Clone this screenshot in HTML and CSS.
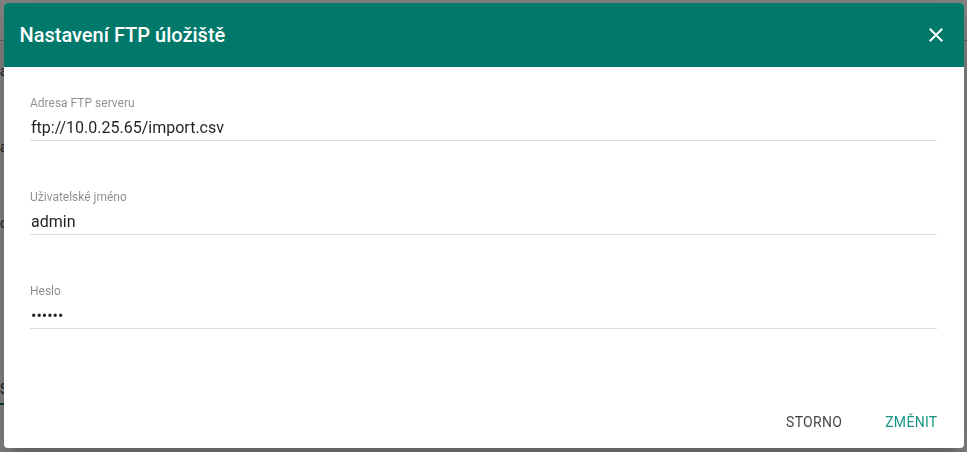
FILE: index.html
```html
<!DOCTYPE html>
<html lang="cs">
<head>
  <meta charset="UTF-8" />
  <meta name="viewport" content="width=device-width, initial-scale=1">
  <title>Nastavení FTP úložiště</title>
  <link rel="stylesheet" href="styles.css">
</head>

<body>
  <div class="page">
    <div class="page-bar"></div>
    <p class="page-line">a</p>
    <p class="page-line">a</p>
    <p class="page-line">c</p>
    <div class="page-tabs"><span class="tab active">S</span></div>
  </div>

  <div class="backdrop">
    <div class="dialog">
      <div class="dialog-head">
        <h2>Nastavení FTP úložiště</h2>
        <button class="close" aria-label="Zavřít">
          <svg viewBox="0 0 24 24" width="24" height="24"><path d="M19 6.41L17.59 5 12 10.59 6.41 5 5 6.41 10.59 12 5 17.59 6.41 19 12 13.41 17.59 19 19 17.59 13.41 12z"/></svg>
        </button>
      </div>

      <div class="dialog-body">
        <div class="field">
          <label for="url">Adresa FTP serveru</label>
          <input type="text" id="url" value="ftp://10.0.25.65/import.csv" />
        </div>

        <div class="field">
          <label for="user">Uživatelské jméno</label>
          <input type="text" id="user" value="admin" />
        </div>

        <div class="field">
          <label for="pass">Heslo</label>
          <input type="password" id="pass" value="secret" />
        </div>
      </div>

      <div class="dialog-actions">
        <button class="btn">Storno</button>
        <button class="btn primary">Změnit</button>
      </div>
    </div>
  </div>
</body>
</html>
```

FILE: styles.css
```css
body {
  margin: 0;
  font-family: Roboto, "Noto Sans", sans-serif;
  background: #fff;
  color: rgba(0, 0, 0, 0.87);
}

.page {
  height: 452px;
  overflow: hidden;
}

.page-bar {
  height: 40px;
  border-bottom: 1px solid #bbb;
}

.page-line {
  margin: 0;
  height: 76px;
  padding-top: 22px;
  box-sizing: border-box;
  font-size: 14px;
  color: #333;
}

.page-tabs {
  margin-top: 110px;
}

.tab {
  display: inline-block;
  padding: 0 10px 6px 0;
  font-size: 14px;
  color: #333;
  border-bottom: 2px solid #00796b;
}

.backdrop {
  position: fixed;
  inset: 0;
  background: rgba(0, 0, 0, 0.5);
}

.dialog {
  width: 960px;
  height: 445px;
  margin: 3px auto 0;
  background: #fff;
  border-radius: 4px;
  overflow: hidden;
  display: flex;
  flex-direction: column;
  box-shadow: 0 11px 15px -7px rgba(0, 0, 0, 0.2), 0 24px 38px 3px rgba(0, 0, 0, 0.14);
}

.dialog-head {
  height: 64px;
  background: #00796b;
  color: #fff;
  display: flex;
  align-items: center;
  justify-content: space-between;
  padding: 0 16px;
}

.dialog-head h2 {
  margin: 0;
  font-size: 20px;
  font-weight: 500;
}

.close {
  width: 24px;
  height: 24px;
  padding: 0;
  border: none;
  background: none;
  fill: #fff;
  cursor: pointer;
}

.close svg { display: block; }

.dialog-body {
  flex: 1;
  padding: 28px 26.5px 0;
}

.field {
  margin-bottom: 48px;
}

.field label {
  display: block;
  font-size: 12px;
  line-height: 16px;
  color: rgba(0, 0, 0, 0.45);
}

.field input {
  display: block;
  width: 100%;
  box-sizing: border-box;
  margin-top: 4px;
  height: 26px;
  padding: 0 1px;
  border: none;
  border-bottom: 1px solid #ddd;
  font-family: inherit;
  font-size: 16px;
  color: rgba(0, 0, 0, 0.87);
  outline: none;
}

.dialog-actions {
  display: flex;
  justify-content: flex-end;
  gap: 11px;
  padding: 0 10px 8px;
}

.btn {
  height: 36px;
  padding: 0 16px;
  border: none;
  background: none;
  font-family: inherit;
  font-size: 14px;
  text-transform: uppercase;
  letter-spacing: 0.3px;
  color: rgba(0, 0, 0, 0.75);
  cursor: pointer;
}

.btn.primary {
  color: #159585;
}
```
